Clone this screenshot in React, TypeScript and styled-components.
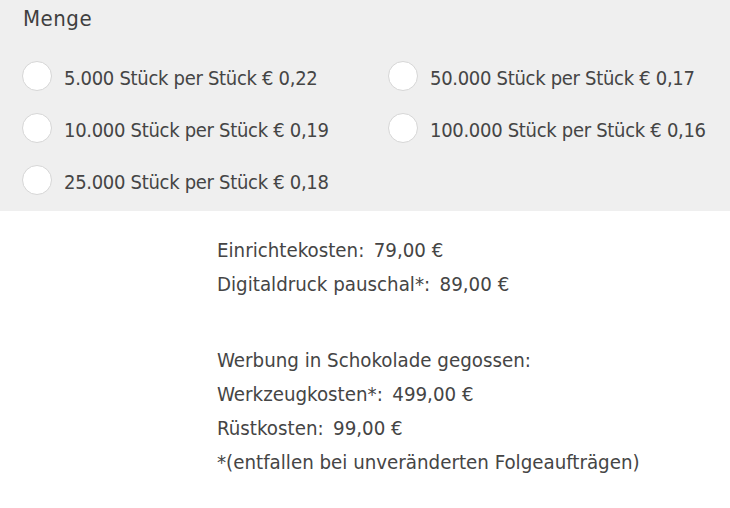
import React from 'react';
import styled, { createGlobalStyle } from 'styled-components';

const GlobalStyle = createGlobalStyle`
  html, body {
    margin: 0;
    padding: 0;
    background: #ffffff;
  }
  body {
    font-family: "DejaVu Sans Condensed", "DejaVu Sans", sans-serif;
    color: #454545;
  }
`;

const OptionsPanel = styled.section`
  background: #efefef;
  padding: 5px 22px 5px;
`;

const Title = styled.h3`
  margin: 0;
  font-size: 22px;
  line-height: 28px;
  font-weight: normal;
  letter-spacing: 0.5px;
  color: #3f3f3f;
  padding-left: 1px;
`;

const OptionGrid = styled.div`
  margin-top: 17px;
  display: grid;
  grid-template-columns: 366px 1fr;
  grid-template-rows: repeat(3, 52px);
  grid-auto-flow: column;
`;

const Option = styled.label`
  display: flex;
  align-items: center;
  gap: 12px;
  font-size: 20px;
  line-height: 24px;
  letter-spacing: -0.3px;
  cursor: pointer;
`;

const OptionText = styled.span`
  padding-top: 4px;
`;

const Radio = styled.span`
  width: 28px;
  height: 28px;
  border-radius: 50%;
  border: 1px solid #d6d6d6;
  background: #ffffff;
  flex-shrink: 0;
`;

const CostInfo = styled.section`
  padding: 22px 0 0 217px;
  font-size: 20.3px;
  line-height: 34px;
`;

const CostGroup = styled.div`
  & + & {
    margin-top: 42px;
  }
`;

const Line = styled.div`
  white-space: pre;
`;

const options = [
  '5.000 Stück per Stück € 0,22',
  '10.000 Stück per Stück € 0,19',
  '25.000 Stück per Stück € 0,18',
  '50.000 Stück per Stück € 0,17',
  '100.000 Stück per Stück € 0,16',
];

const groups = [
  ['Einrichtekosten:\u2009 79,00 €', 'Digitaldruck pauschal*:\u2009 89,00 €'],
  [
    'Werbung in Schokolade gegossen:',
    'Werkzeugkosten*:\u2009 499,00 €',
    'Rüstkosten:\u2009 99,00 €',
    '*(entfallen bei unveränderten Folgeaufträgen)',
  ],
];

export default function App() {
  return (
    <>
      <GlobalStyle />
      <OptionsPanel>
        <Title>Menge</Title>
        <OptionGrid>
          {options.map((o) => (
            <Option key={o}>
              <Radio />
              <OptionText>{o}</OptionText>
            </Option>
          ))}
        </OptionGrid>
      </OptionsPanel>
      <CostInfo>
        {groups.map((g, i) => (
          <CostGroup key={i}>
            {g.map((l) => (
              <Line key={l}>{l}</Line>
            ))}
          </CostGroup>
        ))}
      </CostInfo>
    </>
  );
}
